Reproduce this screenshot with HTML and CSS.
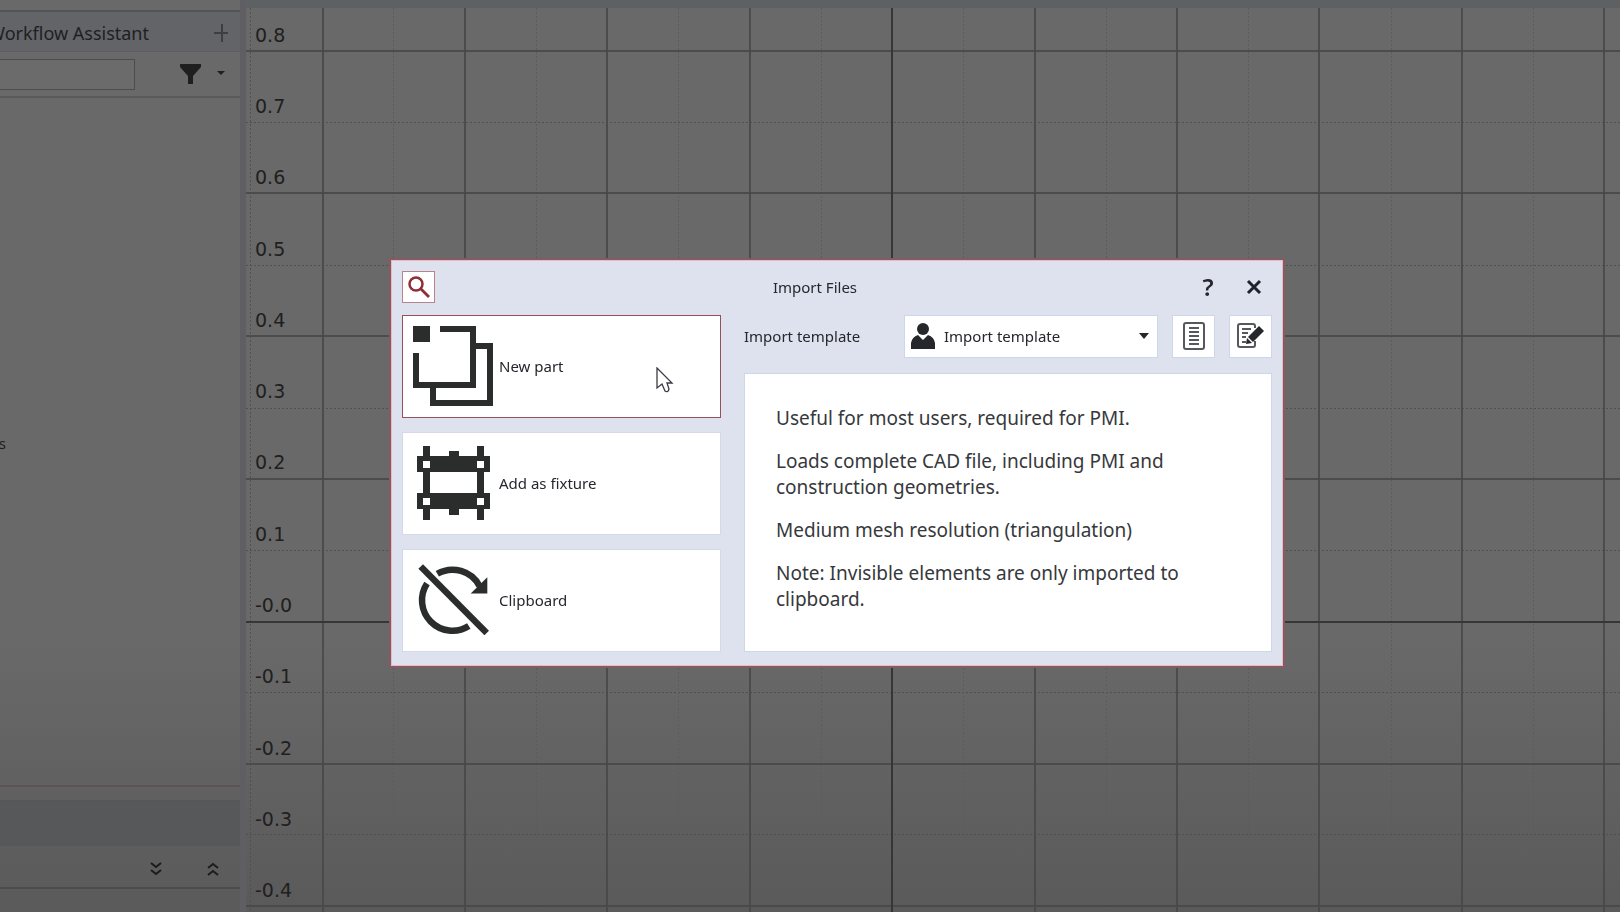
FILE: index.html
```html
<!DOCTYPE html>
<html lang="en">
<head>
<meta charset="UTF-8">
<meta name="viewport" content="width=device-width, initial-scale=1.0">
<title>Import Files</title>
<link rel="stylesheet" href="styles.css">
</head>
<body>

<div class="app">
    <aside class="sidebar">
        <div class="sidebar-tab">
            <span class="tab-title">Workflow Assistant</span>
            <button class="flat-btn tab-add" aria-label="Add tab">
                <svg width="14" height="18"><path d="M0 9H14M8 0V18" stroke="#3c3e41" stroke-width="2"/></svg>
            </button>
        </div>
        <div class="sidebar-filter">
            <input type="text" class="filter-input" aria-label="Filter">
            <button class="flat-btn" aria-label="Filter options">
                <svg width="46" height="20">
                    <path d="M0 0H21V3L13 12V20H8V12L0 3Z" fill="#1f1f1f"/>
                    <path d="M37 7H45L41 11Z" fill="#1f1f1f"/>
                </svg>
            </button>
        </div>
        <div class="sidebar-tree">
            <span class="tree-item">s</span>
        </div>
        <div class="sidebar-split"></div>
        <div class="sidebar-band"></div>
        <div class="sidebar-tools">
            <button class="flat-btn" aria-label="Expand all">
                <svg width="12" height="14"><path d="M1 1L6 5L11 1M1 8L6 12L11 8" fill="none" stroke="#1c1c1c" stroke-width="2"/></svg>
            </button>
            <button class="flat-btn" aria-label="Collapse all">
                <svg width="12" height="14"><path d="M1 6L6 2L11 6M1 13L6 9L11 13" fill="none" stroke="#1c1c1c" stroke-width="2"/></svg>
            </button>
        </div>
        <div class="sidebar-foot"></div>
    </aside>

    <main class="view">
        <svg class="grid-lines" width="100%" height="100%">
            <!-- minor lines -->
            <g class="minor">
                <path d="M0 114.5H2400M0 257.5H2400M0 400.5H2400M0 542.5H2400M0 684.5H2400M0 826.5H2400"/>
                <path d="M4.5 0V1400" />
                <path class="soft" d="M147.5 0V1400M290.5 0V1400M432.5 0V1400M575.5 0V1400M717.5 0V1400M860.5 0V1400M1002.5 0V1400M1145.5 0V1400M1287.5 0V1400"/>
            </g>
            <!-- major lines -->
            <path class="major" d="M0 43H2400M0 185H2400M0 328H2400M0 471H2400M0 756H2400M0 898H2400"/>
            <path class="major" d="M77 0V1400M219 0V1400M361 0V1400M504 0V1400M789 0V1400M931 0V1400M1073 0V1400M1216 0V1400M1358 0V1400"/>
            <!-- axes -->
            <path class="axis" d="M0 614H2400M646 0V1400"/>
        </svg>
        <div class="ruler">
            <span>0.8</span>
            <span>0.7</span>
            <span>0.6</span>
            <span>0.5</span>
            <span>0.4</span>
            <span>0.3</span>
            <span>0.2</span>
            <span>0.1</span>
            <span>-0.0</span>
            <span>-0.1</span>
            <span>-0.2</span>
            <span>-0.3</span>
            <span>-0.4</span>
        </div>
    </main>
</div>

<div class="overlay">
    <section class="dialog" role="dialog" aria-labelledby="dialogTitle">
        <header class="dialog-header">
            <button class="search-btn" aria-label="Search">
                <svg width="22" height="22" fill="none" stroke="#8e2f38">
                    <circle cx="8" cy="8" r="6.5" stroke-width="2.5"/>
                    <path d="M13 13L21 21" stroke-width="2.8"/>
                </svg>
            </button>
            <h1 id="dialogTitle">Import Files</h1>
            <div class="window-btns">
                <button class="flat-btn help-btn" aria-label="Help">?</button>
                <button class="flat-btn close-btn" aria-label="Close">
                    <svg width="16" height="16"><path d="M2 2L14 14M14 2L2 14" stroke="#1e222b" stroke-width="3"/></svg>
                </button>
            </div>
        </header>

        <div class="dialog-body">
            <div class="targets">
                <button class="target selected">
                    <svg width="80" height="80" fill="none" stroke="#2b2d2d" stroke-width="6">
                        <rect width="17" height="16" fill="#2b2d2d" stroke="none"/>
                        <path d="M27 3H60V59H3V27"/>
                        <path d="M63 20H77V77H20V62"/>
                    </svg>
                    New part
                    <svg class="cursor" width="18" height="27">
                        <path d="M1 1V21L6 17L9 24Q12 26 13 22L11 16H16Z" fill="#fff" stroke="#3a3a42" stroke-width="1.3"/>
                    </svg>
                </button>
                <button class="target">
                    <svg width="80" height="80" fill="#2b2d2d">
                        <path d="M10 3H17V77H10ZM64 3H71V77H64ZM36 8H46V14H36ZM36 66H46V72H36Z"/>
                        <path d="M4 13H77V29H4ZM4 50H77V66H4Z"/>
                        <path d="M10 18H17V25H10ZM64 18H71V25H64ZM10 55H17V62H10ZM64 55H71V62H64Z" fill="#fff"/>
                    </svg>
                    Add as fixture
                </button>
                <button class="target">
                    <svg width="80" height="80" fill="none" stroke="#2b2d2d" stroke-width="6.5">
                        <path d="M24.3 13.8A30.5 30.5 0 0 1 66.5 26"/>
                        <path d="M14 23.5A30.5 30.5 0 0 0 55.8 66"/>
                        <path d="M7.7 6.5L73.7 73"/>
                        <path d="M74.3 17.2V33.5H57.7Z" fill="#2b2d2d" stroke="none"/>
                    </svg>
                    Clipboard
                </button>
            </div>

            <div class="details">
                <div class="template-row">
                    <label for="template">Import template</label>
                    <div class="template-select">
                        <svg class="person" width="24" height="26" fill="#25272a">
                            <circle cx="12" cy="6" r="6"/>
                            <path d="M0 26V20Q1 14 7 12L12 17L17 12Q23 14 24 20V26Z"/>
                        </svg>
                        <select id="template">
                            <option>Import template</option>
                        </select>
                        <svg class="caret" width="10" height="6"><path d="M0 0H10L5 6Z" fill="#25272a"/></svg>
                    </div>
                    <button class="icon-btn" aria-label="Show template">
                        <svg width="22" height="28" fill="none" stroke="#56585b" stroke-width="2">
                            <rect x="1" y="1" width="20" height="26" rx="2"/>
                            <path d="M6 6H16M6 10H16M6 14H16M6 18H16M6 22H16"/>
                        </svg>
                    </button>
                    <button class="icon-btn" aria-label="Edit template">
                        <svg width="28" height="26" fill="none" stroke="#56585b" stroke-width="2">
                            <path d="M18 5V3Q18 1 16 1H3Q1 1 1 3V22Q1 24 3 24H16Q18 24 18 22V18"/>
                            <path d="M5 6H14M5 10H11M5 14H9M5 19H9"/>
                            <path d="M22 3L27 8L16 19L11 14Z" fill="#25272a" stroke="none"/>
                            <path d="M10 15L15 20L9 21Z" fill="#25272a" stroke="none"/>
                        </svg>
                    </button>
                </div>
                <div class="description">
                    <p>Useful for most users, required for PMI.</p>
                    <p>Loads complete CAD file, including PMI and construction geometries.</p>
                    <p>Medium mesh resolution (triangulation)</p>
                    <p>Note: Invisible elements are only imported to clipboard.</p>
                </div>
            </div>
        </div>
    </section>
</div>

</body>
</html>
```
FILE: styles.css
```css
* {
    box-sizing: border-box;
}
body {
    margin: 0;
    font-family: "Noto Sans", "Open Sans", sans-serif;
    font-size: 15px;
    color: #25272d;
    overflow: hidden;
}
button, select, input {
    font: inherit;
    color: inherit;
}
button {
    padding: 0;
    cursor: pointer;
}
svg {
    display: block;
    flex-shrink: 0;
}
.flat-btn {
    display: flex;
    align-items: center;
    justify-content: center;
    border: none;
    background: none;
}

/* application behind the dialog */
.app {
    display: flex;
    height: 100vh;
    background: linear-gradient(#696969 70%, #5a5a5a);
}
.sidebar {
    display: flex;
    flex-direction: column;
    width: 246px;
    padding-top: 10px;
    border-right: 6px solid #5e5e63;
    color: #1f1f1f;
}
.sidebar-tab {
    display: flex;
    align-items: center;
    height: 42px;
    padding-top: 2px;
    border-top: 2px solid #535457;
    border-bottom: 1px solid #5b5d60;
    background: #626468;
}
.tab-title {
    display: flex;
    justify-content: flex-end;
    width: 149px;
    overflow: hidden;
    white-space: nowrap;
    font-size: 18px;
}
.tab-add {
    margin-left: auto;
    padding-right: 12px;
}
.sidebar-filter {
    display: flex;
    align-items: center;
    justify-content: space-between;
    height: 46px;
    padding-right: 14px;
    border-bottom: 2px solid #5a5a5b;
}
.filter-input {
    width: 135px;
    height: 31px;
    border: 1px solid #4c4c4d;
    border-left: none;
    background: #6b6b6b;
}
.sidebar-tree {
    flex: 1;
    padding-top: 332px;
}
.tree-item {
    display: flex;
    justify-content: flex-end;
    width: 6px;
    font-size: 15px;
    line-height: 26px;
}
.sidebar-split {
    height: 17px;
    border-top: 2px solid #5b5354;
    border-bottom: 2px solid #555858;
}
.sidebar-band {
    height: 44px;
    background: #56585a;
}
.sidebar-tools {
    display: flex;
    align-items: center;
    justify-content: flex-end;
    gap: 45px;
    height: 43px;
    padding: 4px 21px 0 0;
    border-bottom: 2px solid #4c4c4c;
}
.sidebar-foot {
    height: 23px;
}
.view {
    position: relative;
    flex: 1;
    border-top: 8px solid #5e6164;
    overflow: hidden;
}
.grid-lines {
    position: absolute;
    inset: 0;
}
.minor {
    stroke: #505050;
    stroke-dasharray: 2 2;
}
.soft {
    stroke: #5c5c5c;
}
.major {
    stroke: #484848;
    stroke-width: 2;
    opacity: 0.85;
}
.axis {
    stroke: #363636;
    stroke-width: 2;
}
.ruler {
    position: relative;
    display: grid;
    grid-auto-rows: 1fr;
    align-items: center;
    height: 927px;
    margin-top: -9px;
    padding-left: 9px;
    font-family: "DejaVu Sans", sans-serif;
    font-size: 19px;
    line-height: 24px;
    color: #202020;
}

/* dialog */
.overlay {
    position: fixed;
    inset: 0;
    display: flex;
    align-items: center;
    justify-content: center;
    padding: 13px 0 0 54px;
}
.dialog {
    width: 55%;
    min-width: 892px;
    padding: 10px 10px 13px;
    border: 1px solid #e9b9c4;
    background: #dde2ee;
    box-shadow: 0 0 0 2px #875960;
}
.dialog-header {
    display: flex;
    align-items: center;
    justify-content: space-between;
    margin-bottom: 12px;
}
.search-btn {
    display: flex;
    align-items: center;
    justify-content: center;
    width: 33px;
    height: 32px;
    border: 1px solid #b9838d;
    background: #fff;
}
h1 {
    margin: 0;
    font-size: 15px;
    font-weight: normal;
}
.window-btns {
    display: flex;
    gap: 15px;
}
.help-btn {
    width: 26px;
    font-size: 24px;
    line-height: 32px;
    font-weight: 600;
}
.close-btn {
    width: 36px;
}
.dialog-body {
    display: grid;
    grid-template-columns: 319px 1fr;
    gap: 23px;
}
.targets {
    display: grid;
    gap: 14px;
}
.target {
    position: relative;
    display: flex;
    align-items: center;
    gap: 6px;
    height: 103px;
    padding-left: 10px;
    border: 1px solid #d3d9e8;
    background: #fff;
}
.target.selected {
    border-color: #95505c;
}
.cursor {
    position: absolute;
    top: 51px;
    left: 253px;
}
.details {
    display: flex;
    flex-direction: column;
    gap: 15px;
}
.template-row {
    display: flex;
    align-items: center;
    gap: 14px;
}
.template-row label {
    flex: 1;
}
.template-select {
    position: relative;
}
.template-select select {
    display: block;
    width: 254px;
    height: 43px;
    padding: 0 30px 0 39px;
    border: 1px solid #cfd6e5;
    border-radius: 0;
    background: #fff;
    appearance: none;
}
.person,
.caret {
    position: absolute;
    pointer-events: none;
}
.person {
    top: 8px;
    left: 7px;
}
.caret {
    top: 18px;
    right: 9px;
}
.icon-btn {
    display: flex;
    align-items: center;
    justify-content: center;
    width: 43px;
    height: 43px;
    border: 1px solid #cfd6e5;
    background: #fff;
}
.description {
    flex: 1;
    padding: 31px 60px 0 31px;
    border: 1px solid #cfd6e5;
    background: #fff;
    font-size: 19px;
    line-height: 26px;
    color: #36383c;
}
.description p {
    margin: 0 0 17px;
}
```
